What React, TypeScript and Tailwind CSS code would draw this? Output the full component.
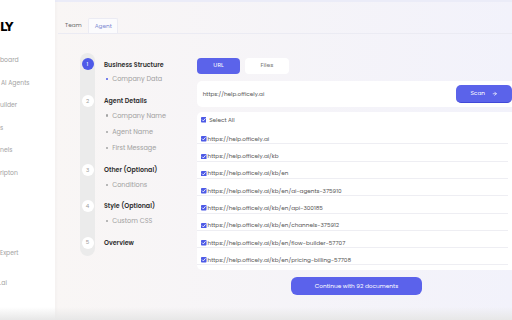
import { ArrowRight } from "lucide-react";

const nav = [
  { label: "board", h: "h-[22.6px]" },
  { label: "AI Agents", h: "h-[22.6px]", pl: "pl-[1px]" },
  { label: "uilder", h: "h-[22.6px]" },
  { label: "s", h: "h-[22.6px]" },
  { label: "nels", h: "h-[22.6px]" },
  { label: "ripton", h: "h-[80px]" },
  { label: "Expert", h: "h-[30px]" },
  { label: ".ai", h: "h-[22.6px]" },
];

const steps = [
  { n: 1, title: "Business Structure", subs: ["Company Data"], active: true },
  { n: 2, title: "Agent Details", subs: ["Company Name", "Agent Name", "First Message"] },
  { n: 3, title: "Other (Optional)", subs: ["Conditions"] },
  { n: 4, title: "Style (Optional)", subs: ["Custom CSS"] },
  { n: 5, title: "Overview", subs: [] },
];

const urls = [
  "https://help.officely.ai",
  "https://help.officely.ai/kb",
  "https://help.officely.ai/kb/en",
  "https://help.officely.ai/kb/en/ai-agents-375910",
  "https://help.officely.ai/kb/en/api-300185",
  "https://help.officely.ai/kb/en/channels-375912",
  "https://help.officely.ai/kb/en/flow-builder-57707",
  "https://help.officely.ai/kb/en/pricing-billing-57708",
];

function Check() {
  return (
    <svg width="5.5" height="5.5" viewBox="0 0 10 10" className="shrink-0">
      <rect width="10" height="10" rx="1.5" fill="#4d5ae6" />
      <path d="M2.3 5.2 L4.2 7.1 L7.8 2.9" stroke="white" strokeWidth="1.5" fill="none" strokeLinecap="round" strokeLinejoin="round" />
    </svg>
  );
}

export default function App() {
  return (
    <div className="w-[512px] h-[320px] overflow-hidden flex relative font-['Poppins','Inter',sans-serif]">
      <aside className="w-[55px] h-full bg-white shrink-0 relative z-10 shadow-[1px_0_4px_rgba(0,0,0,0.03)]">
        <div className="h-[21px]" />
        <div className="text-[13px] leading-[11px] font-bold text-black tracking-[-0.5px] font-['Liberation_Sans_Narrow','DejaVu_Sans_Condensed',sans-serif]">LY</div>
        <div className="flex flex-col mt-[24px] text-[6.1px] text-[#a3a3a3]">
          {nav.map((n) => (
            <div key={n.label} className={`${n.h} ${n.pl ?? ""} leading-[8px] whitespace-nowrap`}>
              {n.label}
            </div>
          ))}
        </div>
      </aside>

      <main className="flex-1 h-full bg-gradient-to-r from-[#f9f6f5] to-[#f2f2fb] flex flex-col">
        <div className="h-[2px] bg-[#ebecf8]" />
        <div className="ml-[3px] mt-[16.3px] flex items-end border-b border-[#ebebf3]">
          <div className="ml-[2px] px-[5px] h-[15px] flex items-center text-[5.8px] text-[#6b6b6b]">Team</div>
          <div className="ml-[1.5px] px-[5.5px] h-[15px] flex items-center text-[5.8px] text-[#7d8bd3] bg-[#fbfbfd] border border-b-0 border-[#ebebf3] rounded-t-[2px]">Agent</div>
        </div>

        <div className="flex mt-[18.4px]">
          <div className="ml-[25px] w-[15px] rounded-full bg-[#ebebeb] shrink-0 h-[203.3px]" />
          <div className="-ml-[15px] w-[117px] pt-[5.6px] flex flex-col gap-[7.4px] shrink-0">
            {steps.map((s) => (
              <div key={s.n} className="flex flex-col">
                <div className="flex items-center h-[12px]">
                  <div className="w-[15px] flex justify-center">
                    <div
                      className={`w-[12px] h-[12px] rounded-full flex items-center justify-center text-[5.5px] ${
                        s.active ? "bg-[#4e5ae8] text-white" : "bg-white text-[#9b9b9b]"
                      }`}
                    >
                      {s.n}
                    </div>
                  </div>
                  <div className="ml-[9px] text-[6.3px] font-semibold text-[#2f2f2f] whitespace-nowrap">{s.title}</div>
                </div>
                {s.subs.map((sub, i) => (
                  <div key={sub} className={`flex items-center h-[16.4px] ${i === 0 ? "mt-[0.6px]" : ""}`}>
                    <div className="w-[15px]" />
                    <div className={`ml-[11px] w-[2.2px] h-[2.2px] rounded-full ${s.active ? "bg-[#4e5ae8]" : "bg-[#a3a3a3]"}`} />
                    <div className="ml-[4px] text-[6.5px] text-[#a0a0a0] whitespace-nowrap">{sub}</div>
                  </div>
                ))}
              </div>
            ))}
          </div>

          <div className="w-[319px] shrink-0 pt-[5px] flex flex-col">
            <div className="flex gap-[5px]">
              <div className="w-[43px] h-[16px] rounded-[4px] bg-[#5b63ea] text-white text-[6px] flex items-center justify-center">URL</div>
              <div className="w-[44px] h-[16px] rounded-[4px] bg-white text-[#777] text-[6px] flex items-center justify-center">Files</div>
            </div>
            <div className="mt-[7.7px] h-[25.7px] rounded-[5px] bg-white flex items-center justify-between pl-[5.7px] pr-[4px]">
              <span className="text-[5.7px] text-[#555]">https://help.officely.ai</span>
              <div className="w-[56px] h-[17.7px] rounded-[5px] bg-[#5b63ea] border-b border-[#4048d8] text-white text-[5.8px] flex items-center justify-center gap-[7px]">
                Scan
                <ArrowRight size={5.5} strokeWidth={3} />
              </div>
            </div>
            <div className="mt-[5px] h-[158.3px] rounded-[5px] bg-white pt-[1px] pr-[8px]">
              <div className="h-[14px] flex items-center gap-[3px] pl-[3.7px] text-[5.7px] text-[#555]">
                <Check />
                Select All
              </div>
              {urls.map((u) => (
                <div key={u} className="h-[17.3px] pt-[7.6px] border-b border-[#eeeef3] flex items-center gap-[1px] pl-[4px] text-[5.7px] text-[#555] whitespace-nowrap">
                  <Check />
                  {u}
                </div>
              ))}
            </div>
            <div className="mt-[6.7px] self-center w-[131.5px] h-[17.6px] rounded-[6px] bg-[#5b62eb] text-white text-[5.8px] flex items-center justify-center">
              Continue with 92 documents
            </div>
          </div>
        </div>
      </main>

      <div className="absolute bottom-0 inset-x-0 h-[13px] bg-gradient-to-b from-transparent to-[#e7e7e7] pointer-events-none z-20" />
    </div>
  );
}
